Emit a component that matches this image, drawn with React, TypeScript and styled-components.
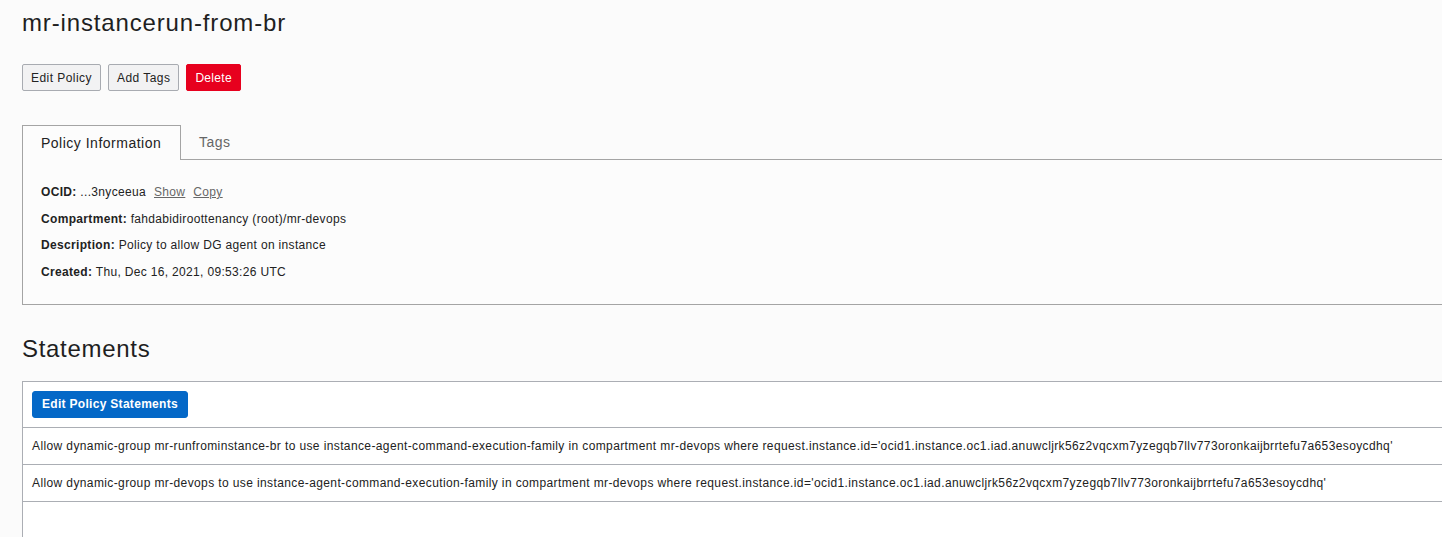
import React from "react";
import styled, { createGlobalStyle } from "styled-components";

const Global = createGlobalStyle`
  html, body { margin: 0; padding: 0; background: #fbfbfb; }
  body { font-family: "Liberation Sans", Arial, Helvetica, sans-serif; color: #161513; }
  * { box-sizing: border-box; }
`;

const Viewport = styled.div`
  width: 100%;
  height: 537px;
  overflow: hidden;
  background: #fbfbfb;
`;

const Page = styled.div`
  width: 1500px;
  padding: 9px 0 0 22px;
  display: flex;
  flex-direction: column;
`;

const Title = styled.h1`
  margin: 0;
  font-size: 24px;
  font-weight: 400;
  line-height: 28px;
  letter-spacing: 0.85px;
  color: #1f1f1f;
`;

const Actions = styled.div`
  display: flex;
  gap: 7px;
  margin-top: 27px;
`;

const Button = styled.button<{ $variant?: "default" | "danger" | "primary" }>`
  height: 27px;
  padding: 0 8px;
  font-family: inherit;
  font-size: 12px;
  letter-spacing: 0.45px;
  border-radius: 2px;
  cursor: pointer;
  ${(p) =>
    p.$variant === "danger"
      ? `background:#e7001e;color:#fff;border:1px solid #e7001e;padding:0 8px;letter-spacing:0.3px;`
      : p.$variant === "primary"
      ? `background:#0468c7;color:#fff;border:1px solid #0468c7;font-weight:700;border-radius:3px;padding:0 9px;letter-spacing:0.3px;`
      : `background:#f2f2f3;color:#222;border:1px solid #a8abb1;`}
`;

const TabBar = styled.div`
  display: flex;
  margin-top: 34px;
  height: 35px;
`;

const Tab = styled.div<{ $active?: boolean }>`
  height: 35px;
  display: flex;
  align-items: center;
  padding: 0 18px;
  font-size: 14px;
  letter-spacing: 0.5px;
  ${(p) =>
    p.$active
      ? `border:1px solid #a4a4a4;border-bottom:none;background:#fcfcfc;color:#222;font-weight:500;width:159px;`
      : `color:#666;border-bottom:1px solid #a4a4a4;padding:0 18px 0 18px;`}
`;

const TabFill = styled.div`
  flex: 1;
  border-bottom: 1px solid #a4a4a4;
`;

const InfoPanel = styled.div`
  border: 1px solid #a4a4a4;
  border-top: none;
  background: #fcfcfc;
  padding: 23px 18px 14px;
  display: flex;
  flex-direction: column;
`;

const InfoRow = styled.div`
  font-size: 12px;
  line-height: 18px;
  height: 26.7px;
  letter-spacing: 0.33px;
  color: #222;
`;

const Label = styled.b`
  font-weight: 700;
`;

const LinkText = styled.span`
  color: #676767;
  text-decoration: underline;
  margin-left: 8px;
`;

const SectionTitle = styled.h2`
  margin: 30px 0 0;
  font-size: 24px;
  font-weight: 400;
  line-height: 28px;
  letter-spacing: 0.7px;
  color: #1f1f1f;
`;

const Table = styled.div`
  margin-top: 18px;
  border: 1px solid #abaeb4;
  background: #fff;
  height: 200px;
`;

const ToolbarRow = styled.div`
  padding: 9px;
  border-bottom: 1px solid #abaeb4;
`;

const StatementRow = styled.div`
  height: 37px;
  display: flex;
  align-items: center;
  padding: 0 9px;
  font-size: 12px;
  letter-spacing: 0.385px;
  white-space: nowrap;
  color: #222;
  border-bottom: 1px solid #abaeb4;
`;

const statements = [
  "Allow dynamic-group mr-runfrominstance-br to use instance-agent-command-execution-family in compartment mr-devops where request.instance.id='ocid1.instance.oc1.iad.anuwcljrk56z2vqcxm7yzegqb7llv773oronkaijbrrtefu7a653esoycdhq'",
  "Allow dynamic-group mr-devops to use instance-agent-command-execution-family in compartment mr-devops where request.instance.id='ocid1.instance.oc1.iad.anuwcljrk56z2vqcxm7yzegqb7llv773oronkaijbrrtefu7a653esoycdhq'",
];

export default function App() {
  return (
    <>
      <Global />
      <Viewport>
        <Page>
          <Title>mr-instancerun-from-br</Title>
          <Actions>
            <Button>Edit Policy</Button>
            <Button>Add Tags</Button>
            <Button $variant="danger">Delete</Button>
          </Actions>
          <TabBar>
            <Tab $active>Policy Information</Tab>
            <Tab>Tags</Tab>
            <TabFill />
          </TabBar>
          <InfoPanel>
            <InfoRow>
              <Label>OCID:</Label> ...3nyceeua<LinkText>Show</LinkText>
              <LinkText>Copy</LinkText>
            </InfoRow>
            <InfoRow>
              <Label>Compartment:</Label> fahdabidiroottenancy (root)/mr-devops
            </InfoRow>
            <InfoRow>
              <Label>Description:</Label> Policy to allow DG agent on instance
            </InfoRow>
            <InfoRow>
              <Label>Created:</Label> Thu, Dec 16, 2021, 09:53:26 UTC
            </InfoRow>
          </InfoPanel>
          <SectionTitle>Statements</SectionTitle>
          <Table>
            <ToolbarRow>
              <Button $variant="primary">Edit Policy Statements</Button>
            </ToolbarRow>
            {statements.map((s, i) => (
              <StatementRow key={i}>{s}</StatementRow>
            ))}
          </Table>
        </Page>
      </Viewport>
    </>
  );
}
